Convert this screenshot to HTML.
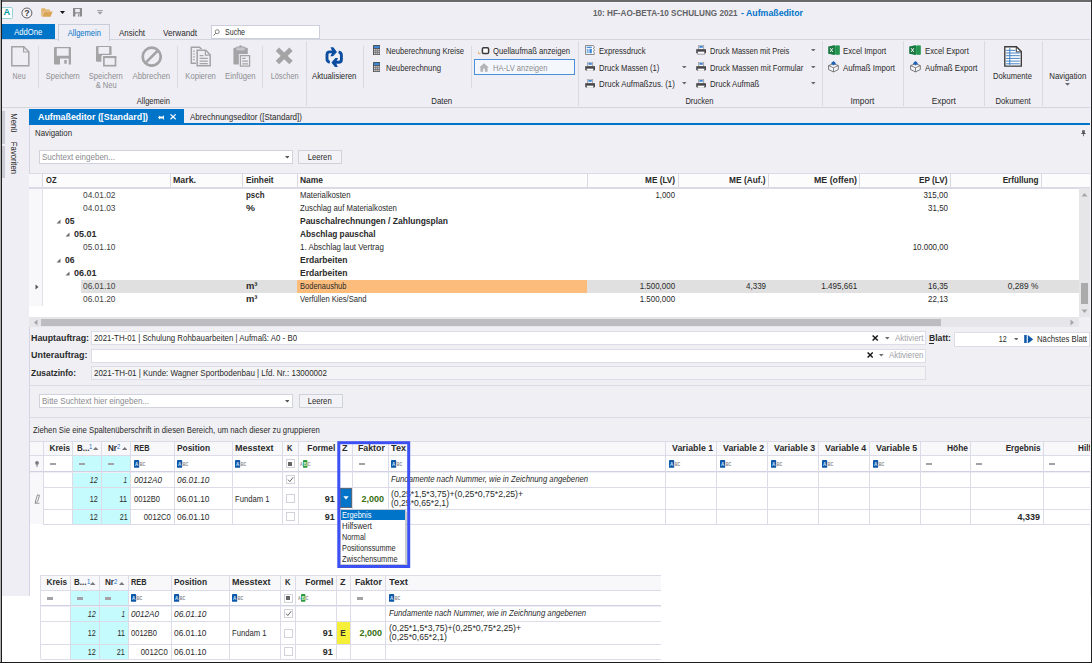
<!DOCTYPE html>
<html lang="de">
<head>
<meta charset="utf-8">
<title>Aufmaßeditor</title>
<style>
html,body{margin:0;padding:0;background:#fff;}
body{width:1092px;height:663px;overflow:hidden;}
#root{position:relative;width:1092px;height:663px;overflow:hidden;background:#fff;font-family:"Liberation Sans",sans-serif;font-size:8.8px;line-height:11px;color:#2a2a2a;}
#root div,#root span,#root svg{position:absolute;}
#root>div{left:0;top:0;width:0;height:0;}
#root span{white-space:pre;}
#root span b,#root span i{position:static;}
#root i{font-style:italic;}
</style>
</head>
<body>
<div id="root">
<div class="app-background">
<div style="left:0px;top:0px;width:1092px;height:596px;background:#efeef4;"></div>
<div style="left:29px;top:125px;width:1061px;height:471px;background:#f0f0f4;"></div>
</div>
<div class="title-bar">
<span style="top:7.5px;left:593px;transform-origin:0 50%;transform:scaleX(0.925);color:#636367;"><b>10: HF-AO-BETA-10 SCHULUNG 2021</b></span>
<span style="top:7.5px;left:740.8px;transform-origin:0 50%;transform:scaleX(0.996);color:#0074c9;"><b>- Aufmaßeditor</b></span>
</div>
<div class="ribbon-tabs">
<div style="left:2px;top:24px;width:53px;height:16px;background:#0074c9;"></div>
<span style="top:27.4px;left:12.36px;transform:scaleX(0.867);color:#fff;">AddOne</span>
<div style="left:2px;top:39.3px;width:1088px;height:1px;background:#d3d5df;"></div>
<div style="left:58px;top:24px;width:52px;height:17px;background:#efeef4;border:1px solid #c9ccd9;border-bottom:none;box-sizing:border-box;"></div>
<span style="top:27.9px;left:64.68px;transform:scaleX(0.854);color:#0074c9;">Allgemein</span>
<span style="top:27.9px;left:119px;transform-origin:0 50%;transform:scaleX(0.901);">Ansicht</span>
<span style="top:27.9px;left:163px;transform-origin:0 50%;transform:scaleX(0.927);">Verwandt</span>
<div style="left:211px;top:25px;width:109px;height:14px;background:#fff;border:1px solid #cdd0dc;box-sizing:border-box;"></div>
<span style="top:27.4px;left:225px;transform-origin:0 50%;transform:scaleX(0.802);">Suche</span>
</div>
<div class="ribbon-groups">
<div style="left:2px;top:107px;width:1088px;height:1px;background:#d3d5df;"></div>
<div style="left:38px;top:46px;width:1px;height:42px;background:#d9dae3;"></div>
<div style="left:177px;top:46px;width:1px;height:42px;background:#d9dae3;"></div>
<div style="left:262px;top:46px;width:1px;height:42px;background:#d9dae3;"></div>
<div style="left:363px;top:46px;width:1px;height:42px;background:#d9dae3;"></div>
<div style="left:471px;top:46px;width:1px;height:42px;background:#d9dae3;"></div>
<div style="left:306px;top:41px;width:1px;height:65px;background:#d9dae3;"></div>
<div style="left:578px;top:41px;width:1px;height:65px;background:#d9dae3;"></div>
<div style="left:822px;top:41px;width:1px;height:65px;background:#d9dae3;"></div>
<div style="left:903px;top:41px;width:1px;height:65px;background:#d9dae3;"></div>
<div style="left:984px;top:41px;width:1px;height:65px;background:#d9dae3;"></div>
<div style="left:1042px;top:41px;width:1px;height:65px;background:#d9dae3;"></div>
<span style="top:70.9px;left:10.63px;transform:scaleX(0.805);color:#8e8e92;">Neu</span>
<span style="top:70.9px;left:42.89px;transform:scaleX(0.858);color:#8e8e92;">Speichern</span>
<span style="top:70.9px;left:86.19px;transform:scaleX(0.858);color:#8e8e92;">Speichern</span>
<span style="top:79.9px;left:93.77px;transform:scaleX(0.859);color:#8e8e92;">&amp; Neu</span>
<span style="top:70.9px;left:130.42px;transform:scaleX(0.881);color:#8e8e92;">Abbrechen</span>
<span style="top:70.9px;left:182.59px;transform:scaleX(0.866);color:#8e8e92;">Kopieren</span>
<span style="top:70.9px;left:222.93px;transform:scaleX(0.878);color:#8e8e92;">Einfügen</span>
<span style="top:70.9px;left:267.67px;transform:scaleX(0.842);color:#8e8e92;">Löschen</span>
<span style="top:70.9px;left:309.11px;transform:scaleX(0.883);">Aktualisieren</span>
<span style="top:95.5px;left:134.08px;transform:scaleX(0.854);">Allgemein</span>
<span style="top:95.5px;left:429.86px;transform:scaleX(0.894);">Daten</span>
<span style="top:95.5px;left:682.92px;transform:scaleX(0.855);">Drucken</span>
<span style="top:95.5px;left:849.53px;transform:scaleX(0.962);">Import</span>
<span style="top:95.5px;left:930.58px;transform:scaleX(0.943);">Export</span>
<span style="top:95.5px;left:992.65px;transform:scaleX(0.873);">Dokument</span>
<span style="top:45.8px;left:385.6px;transform-origin:0 50%;transform:scaleX(0.867);">Neuberechnung Kreise</span>
<span style="top:62.5px;left:385.6px;transform-origin:0 50%;transform:scaleX(0.878);">Neuberechnung</span>
<span style="top:45.8px;left:493px;transform-origin:0 50%;transform:scaleX(0.87);">Quellaufmaß anzeigen</span>
<div style="left:474px;top:59px;width:101px;height:16px;background:#f4f7fc;border:1px solid #4a90d9;box-sizing:border-box;"></div>
<span style="top:62.5px;left:493px;transform-origin:0 50%;transform:scaleX(0.859);color:#8e8e92;">HA-LV anzeigen</span>
<span style="top:45.8px;left:599px;transform-origin:0 50%;transform:scaleX(0.872);">Expressdruck</span>
<span style="top:62.5px;left:599px;transform-origin:0 50%;transform:scaleX(0.869);">Druck Massen (1)</span>
<span style="top:79.3px;left:599px;transform-origin:0 50%;transform:scaleX(0.891);">Druck Aufmaßzus. (1)</span>
<span style="top:45.8px;left:709.8px;transform-origin:0 50%;transform:scaleX(0.853);">Druck Massen mit Preis</span>
<span style="top:62.5px;left:709.8px;transform-origin:0 50%;transform:scaleX(0.863);">Druck Massen mit Formular</span>
<span style="top:79.3px;left:709.8px;transform-origin:0 50%;transform:scaleX(0.883);">Druck Aufmaß</span>
<span style="top:45.8px;left:843.3px;transform-origin:0 50%;transform:scaleX(0.884);">Excel Import</span>
<span style="top:62.5px;left:843.3px;transform-origin:0 50%;transform:scaleX(0.894);">Aufmaß Import</span>
<span style="top:45.8px;left:924.5px;transform-origin:0 50%;transform:scaleX(0.887);">Excel Export</span>
<span style="top:62.5px;left:924.5px;transform-origin:0 50%;transform:scaleX(0.895);">Aufmaß Export</span>
<span style="top:70.9px;left:989.5px;transform:scaleX(0.862);">Dokumente</span>
<span style="top:70.9px;left:1046.71px;transform:scaleX(0.89);">Navigation</span>
</div>
<div class="side-strip">
<div style="left:2px;top:111px;width:3px;height:33px;background:#cbcbd6;"></div>
<div style="left:2px;top:146px;width:3px;height:32px;background:#cbcbd6;"></div>
<span style="left:13px;top:122.5px;transform:translate(-50%,-50%) rotate(90deg) scaleX(0.88);">Menü</span>
<span style="left:13px;top:158px;transform:translate(-50%,-50%) rotate(90deg) scaleX(0.88);">Favoriten</span>
</div>
<div class="document-tabs">
<div style="left:29px;top:109px;width:155px;height:16px;background:#0074c9;"></div>
<span style="top:111.7px;left:37.5px;transform-origin:0 50%;transform:scaleX(1.005);color:#fff;"><b>Aufmaßeditor ([Standard])</b></span>
<span style="top:111.7px;left:190px;transform-origin:0 50%;transform:scaleX(0.912);">Abrechnungseditor ([Standard])</span>
<div style="left:29px;top:123.4px;width:1062px;height:1.8px;background:#0074c9;"></div>
<div style="left:28.5px;top:125px;width:1px;height:471px;background:#d4d4e4;"></div>
</div>
<div class="navigation-panel">
<span style="top:127.9px;left:35px;transform-origin:0 50%;transform:scaleX(0.89);">Navigation</span>
<div style="left:39px;top:150px;width:254px;height:14px;background:#fff;border:1px solid #d0d2dc;box-sizing:border-box;"></div>
<span style="top:152.2px;left:42px;transform-origin:0 50%;transform:scaleX(0.91);color:#8a8a90;">Suchtext eingeben...</span>
<div style="left:298px;top:150px;width:44px;height:14px;background:#f3f3f7;border:1px solid #cfd1db;box-sizing:border-box;"></div>
<span style="top:152.2px;left:305.8px;transform:scaleX(0.876);">Leeren</span>
<div style="left:29px;top:173px;width:1061px;height:144px;background:#fff;"></div>
<div style="left:29px;top:173px;width:1061px;height:15px;background:#fcfcfd;"></div>
<div style="left:29px;top:173px;width:13px;height:132.5px;background:#f8f8fa;"></div>
<div style="left:29px;top:173px;width:1061px;height:1px;background:#dcdce8;"></div>
<div style="left:29px;top:187px;width:1061px;height:1.5px;background:#dadae6;"></div>
<div style="left:42px;top:174px;width:1px;height:13px;background:#d8d9e2;"></div>
<div style="left:170px;top:174px;width:1px;height:13px;background:#d8d9e2;"></div>
<div style="left:242px;top:174px;width:1px;height:13px;background:#d8d9e2;"></div>
<div style="left:297px;top:174px;width:1px;height:13px;background:#d8d9e2;"></div>
<div style="left:587px;top:174px;width:1px;height:13px;background:#d8d9e2;"></div>
<div style="left:678px;top:174px;width:1px;height:13px;background:#d8d9e2;"></div>
<div style="left:768px;top:174px;width:1px;height:13px;background:#d8d9e2;"></div>
<div style="left:859px;top:174px;width:1px;height:13px;background:#d8d9e2;"></div>
<div style="left:950px;top:174px;width:1px;height:13px;background:#d8d9e2;"></div>
<div style="left:1041px;top:174px;width:1px;height:13px;background:#d8d9e2;"></div>
<div style="left:42px;top:188px;width:1px;height:117.5px;background:#e0e0ea;"></div>
<span style="top:174.8px;left:46px;transform-origin:0 50%;transform:scaleX(0.859);"><b>OZ</b></span>
<span style="top:174.8px;left:173px;transform-origin:0 50%;transform:scaleX(1.001);"><b>Mark.</b></span>
<span style="top:174.8px;left:245.5px;transform-origin:0 50%;transform:scaleX(0.938);"><b>Einheit</b></span>
<span style="top:174.8px;left:300px;transform-origin:0 50%;transform:scaleX(0.96);"><b>Name</b></span>
<span style="top:174.8px;left:643.41px;transform-origin:100% 50%;transform:scaleX(0.935);"><b>ME (LV)</b></span>
<span style="top:174.8px;left:727.39px;transform-origin:100% 50%;transform:scaleX(0.945);"><b>ME (Auf.)</b></span>
<span style="top:174.8px;left:814px;transform-origin:100% 50%;transform:scaleX(1.0);"><b>ME (offen)</b></span>
<span style="top:174.8px;left:917.03px;transform-origin:100% 50%;transform:scaleX(0.935);"><b>EP (LV)</b></span>
<span style="top:174.8px;left:999.89px;transform-origin:100% 50%;transform:scaleX(0.932);"><b>Erfüllung</b></span>
<div style="left:81px;top:280px;width:998px;height:13px;background:#e0e0e0;"></div>
<div style="left:297px;top:280px;width:290px;height:13px;background:#fcbc7c;"></div>
<span style="top:190.1px;left:83px;transform-origin:0 50%;transform:scaleX(0.949);color:#444;">04.01.02</span>
<span style="top:203.1px;left:83px;transform-origin:0 50%;transform:scaleX(0.949);color:#444;">04.01.03</span>
<span style="top:216.1px;left:65px;transform-origin:0 50%;transform:scaleX(0.97);"><b>05</b></span>
<span style="top:229.1px;left:74px;transform-origin:0 50%;transform:scaleX(1.022);"><b>05.01</b></span>
<span style="top:242.1px;left:83px;transform-origin:0 50%;transform:scaleX(0.949);color:#444;">05.01.10</span>
<span style="top:255.1px;left:65px;transform-origin:0 50%;transform:scaleX(0.97);"><b>06</b></span>
<span style="top:268.1px;left:74px;transform-origin:0 50%;transform:scaleX(1.022);"><b>06.01</b></span>
<span style="top:281.3px;left:83px;transform-origin:0 50%;transform:scaleX(0.949);color:#444;">06.01.10</span>
<span style="top:294.3px;left:83px;transform-origin:0 50%;transform:scaleX(0.949);color:#444;">06.01.20</span>
<span style="top:190.1px;left:245.5px;transform-origin:0 50%;transform:scaleX(0.9);"><b>psch</b></span>
<span style="top:203.1px;left:245.5px;transform-origin:0 50%;transform:scaleX(1.15);"><b>%</b></span>
<span style="top:281.3px;left:245.5px;transform-origin:0 50%;transform:scaleX(1.068);"><b>m³</b></span>
<span style="top:294.3px;left:245.5px;transform-origin:0 50%;transform:scaleX(1.068);"><b>m³</b></span>
<span style="top:190.1px;left:300px;transform-origin:0 50%;transform:scaleX(0.883);">Materialkosten</span>
<span style="top:203.1px;left:300px;transform-origin:0 50%;transform:scaleX(0.88);">Zuschlag auf Materialkosten</span>
<span style="top:216.1px;left:300px;transform-origin:0 50%;transform:scaleX(0.964);"><b>Pauschalrechnungen / Zahlungsplan</b></span>
<span style="top:229.1px;left:300px;transform-origin:0 50%;transform:scaleX(0.942);"><b>Abschlag pauschal</b></span>
<span style="top:242.1px;left:300px;transform-origin:0 50%;transform:scaleX(0.902);">1. Abschlag laut Vertrag</span>
<span style="top:255.1px;left:300px;transform-origin:0 50%;transform:scaleX(0.972);"><b>Erdarbeiten</b></span>
<span style="top:268.1px;left:300px;transform-origin:0 50%;transform:scaleX(0.972);"><b>Erdarbeiten</b></span>
<span style="top:281.3px;left:300px;transform-origin:0 50%;transform:scaleX(0.856);">Bodenaushub</span>
<span style="top:294.3px;left:300px;transform-origin:0 50%;transform:scaleX(0.866);">Verfüllen Kies/Sand</span>
<span style="top:190.1px;left:653.48px;transform-origin:100% 50%;transform:scaleX(0.886);">1,000</span>
<span style="top:281.3px;left:636.36px;transform-origin:100% 50%;transform:scaleX(0.907);">1.500,000</span>
<span style="top:294.3px;left:636.36px;transform-origin:100% 50%;transform:scaleX(0.907);">1.500,000</span>
<span style="top:281.3px;left:743.98px;transform-origin:100% 50%;transform:scaleX(0.908);">4,339</span>
<span style="top:281.3px;left:818.36px;transform-origin:100% 50%;transform:scaleX(0.92);">1.495,661</span>
<span style="top:190.1px;left:921.09px;transform-origin:100% 50%;transform:scaleX(0.911);">315,00</span>
<span style="top:203.1px;left:925.98px;transform-origin:100% 50%;transform:scaleX(0.908);">31,50</span>
<span style="top:242.1px;left:908.86px;transform-origin:100% 50%;transform:scaleX(0.907);">10.000,00</span>
<span style="top:281.3px;left:925.98px;transform-origin:100% 50%;transform:scaleX(0.908);">16,35</span>
<span style="top:294.3px;left:925.98px;transform-origin:100% 50%;transform:scaleX(0.908);">22,13</span>
<span style="top:281.3px;left:1006.22px;transform-origin:100% 50%;transform:scaleX(0.945);">0,289 %</span>
<svg style="left:55.6px;top:219.3px;" width="5" height="5" viewBox="0 0 5 5"><path d="M4.5 0.5V4.5H0.5Z" fill="#6c6c70"/></svg>
<svg style="left:64.8px;top:232.3px;" width="5" height="5" viewBox="0 0 5 5"><path d="M4.5 0.5V4.5H0.5Z" fill="#6c6c70"/></svg>
<svg style="left:55.6px;top:258.3px;" width="5" height="5" viewBox="0 0 5 5"><path d="M4.5 0.5V4.5H0.5Z" fill="#6c6c70"/></svg>
<svg style="left:64.8px;top:271.3px;" width="5" height="5" viewBox="0 0 5 5"><path d="M4.5 0.5V4.5H0.5Z" fill="#6c6c70"/></svg>
<svg style="left:34.5px;top:283.5px;" width="4" height="6" viewBox="0 0 4 6"><path d="M0.5 0.5L3.5 3L0.5 5.5Z" fill="#555"/></svg>
<div style="left:1079px;top:188px;width:11.7px;height:129px;background:#e6e6e9;"></div>
<div style="left:1081px;top:283px;width:7px;height:21px;background:#ababab;"></div>
<svg style="left:1081px;top:191.5px;" width="7" height="5" viewBox="0 0 7 5"><path d="M0.5 4.5L3.5 1L6.5 4.5Z" fill="#a6a6aa"/></svg>
<svg style="left:1081px;top:308.5px;" width="7" height="5" viewBox="0 0 7 5"><path d="M0.5 0.5L3.5 4L6.5 0.5Z" fill="#a6a6aa"/></svg>
<div style="left:29px;top:317px;width:1050px;height:10px;background:#e6e6e9;"></div>
<div style="left:41px;top:319px;width:900px;height:7px;background:#bdbdc0;"></div>
<svg style="left:33px;top:319px;" width="5" height="7" viewBox="0 0 5 7"><path d="M4.5 0.5L1 3.5L4.5 6.5Z" fill="#a6a6aa"/></svg>
<svg style="left:1069.5px;top:319px;" width="5" height="7" viewBox="0 0 5 7"><path d="M0.5 0.5L4 3.5L0.5 6.5Z" fill="#a6a6aa"/></svg>
</div>
<div class="order-form">
<span style="top:333.4px;left:30.8px;transform-origin:0 50%;transform:scaleX(1.006);"><b>Hauptauftrag:</b></span>
<span style="top:350.4px;left:30.8px;transform-origin:0 50%;transform:scaleX(1.014);"><b>Unterauftrag:</b></span>
<span style="top:367.9px;left:30.8px;transform-origin:0 50%;transform:scaleX(0.959);"><b>Zusatzinfo:</b></span>
<div style="left:91px;top:331px;width:835px;height:14px;background:#fff;border:1px solid #dcdde6;box-sizing:border-box;"></div>
<div style="left:91px;top:349px;width:835px;height:14px;background:#fff;border:1px solid #dcdde6;box-sizing:border-box;"></div>
<div style="left:91px;top:366px;width:835px;height:14px;background:#f4f4f6;border:1px solid #dcdde6;box-sizing:border-box;"></div>
<span style="top:333.2px;left:93.5px;transform-origin:0 50%;transform:scaleX(0.894);">2021-TH-01 | Schulung Rohbauarbeiten | Aufmaß: A0 - B0</span>
<span style="top:367.9px;left:93.5px;transform-origin:0 50%;transform:scaleX(0.906);">2021-TH-01 | Kunde: Wagner Sportbodenbau | Lfd. Nr.: 13000002</span>
<span style="top:333.2px;left:894.8px;transform-origin:0 50%;transform:scaleX(0.911);color:#a0a0a6;">Aktiviert</span>
<span style="top:350.4px;left:889px;transform-origin:0 50%;transform:scaleX(0.893);color:#a0a0a6;">Aktivieren</span>
<span style="top:333.4px;left:929px;transform-origin:0 50%;transform:scaleX(0.978);"><b>Blatt:</b></span>
<div style="left:929px;top:343px;width:5px;height:1px;background:#2a2a2a;"></div>
<div style="left:953.5px;top:331.5px;width:136.5px;height:15px;background:#fff;border:1px solid #dcdde6;box-sizing:border-box;"></div>
<span style="top:333.7px;left:996.7px;transform-origin:100% 50%;transform:scaleX(0.817);">12</span>
<span style="top:333.7px;left:1036.5px;transform-origin:0 50%;transform:scaleX(0.882);">Nächstes Blatt</span>
</div>
<div class="measure-toolbar">
<div style="left:29px;top:385px;width:1061px;height:1px;background:#d9dae3;"></div>
<div style="left:39px;top:394px;width:254px;height:14px;background:#fff;border:1px solid #d0d2dc;box-sizing:border-box;"></div>
<span style="top:396.2px;left:42px;transform-origin:0 50%;transform:scaleX(0.912);color:#8a8a90;">Bitte Suchtext hier eingeben...</span>
<div style="left:298.5px;top:394px;width:44px;height:14px;background:#f3f3f7;border:1px solid #cfd1db;box-sizing:border-box;"></div>
<span style="top:396.2px;left:306.3px;transform:scaleX(0.876);">Leeren</span>
<div style="left:29px;top:417px;width:1061px;height:1px;background:#d9dae3;"></div>
<span style="top:425.2px;left:33.3px;transform-origin:0 50%;transform:scaleX(0.881);">Ziehen Sie eine Spaltenüberschrift in diesen Bereich, um nach dieser zu gruppieren</span>
</div>
<div class="measure-grids">
<div style="left:30px;top:441px;width:1060px;height:155px;background:#fff;"></div>
<div style="left:30px;top:441px;width:1060px;height:14px;background:#f8f8fb;"></div>
<div style="left:72.5px;top:455px;width:57.5px;height:69px;background:#c6fbfd;"></div>
<div style="left:30px;top:455px;width:13px;height:69px;background:#f8f8fb;"></div>
<div style="left:30px;top:441px;width:1060px;height:1px;background:#dcdce8;"></div>
<div style="left:30px;top:455px;width:1060px;height:1px;background:#dcdce8;"></div>
<div style="left:30px;top:471px;width:1060px;height:1px;background:#d0d0e2;"></div>
<div style="left:43px;top:487px;width:1047px;height:1px;background:#dcdce8;"></div>
<div style="left:43px;top:509px;width:1047px;height:1px;background:#dcdce8;"></div>
<div style="left:43px;top:524px;width:1047px;height:1px;background:#dcdce8;"></div>
<div style="left:30px;top:472px;width:1060px;height:1px;background:#eeeef5;"></div>
<div style="left:43px;top:441px;width:1px;height:83px;background:#dcdce8;"></div>
<div style="left:72px;top:441px;width:1px;height:83px;background:#dcdce8;"></div>
<div style="left:101px;top:441px;width:1px;height:83px;background:#dcdce8;"></div>
<div style="left:130px;top:441px;width:1px;height:83px;background:#dcdce8;"></div>
<div style="left:174px;top:441px;width:1px;height:83px;background:#dcdce8;"></div>
<div style="left:232px;top:441px;width:1px;height:83px;background:#dcdce8;"></div>
<div style="left:282px;top:441px;width:1px;height:83px;background:#dcdce8;"></div>
<div style="left:298px;top:441px;width:1px;height:83px;background:#dcdce8;"></div>
<div style="left:338px;top:441px;width:1px;height:83px;background:#dcdce8;"></div>
<div style="left:352px;top:441px;width:1px;height:83px;background:#dcdce8;"></div>
<div style="left:388px;top:441px;width:1px;height:83px;background:#dcdce8;"></div>
<div style="left:665px;top:441px;width:1px;height:83px;background:#dcdce8;"></div>
<div style="left:716px;top:441px;width:1px;height:83px;background:#dcdce8;"></div>
<div style="left:767px;top:441px;width:1px;height:83px;background:#dcdce8;"></div>
<div style="left:818px;top:441px;width:1px;height:83px;background:#dcdce8;"></div>
<div style="left:869px;top:441px;width:1px;height:83px;background:#dcdce8;"></div>
<div style="left:920px;top:441px;width:1px;height:83px;background:#dcdce8;"></div>
<div style="left:970px;top:441px;width:1px;height:83px;background:#dcdce8;"></div>
<div style="left:1043px;top:441px;width:1px;height:83px;background:#dcdce8;"></div>
<span style="top:442.85px;left:47.98px;transform-origin:100% 50%;transform:scaleX(0.931);"><b>Kreis</b></span>
<span style="top:442.85px;left:76.6px;transform-origin:0 50%;transform:scaleX(0.906);"><b>B...</b></span>
<span style="left:89.3px;top:442.34999999999997px;font-size:7.4px;line-height:9px;color:#1a6fc4;transform:scaleX(0.8);transform-origin:0 50%;">1</span>
<svg style="left:92.5px;top:446.95px;" width="5.5" height="3" viewBox="0 0 5.5 3"><path d="M0 3L2.75 0L5.5 3Z" fill="#77777c"/></svg>
<span style="top:442.85px;left:107.55px;transform-origin:0 50%;transform:scaleX(0.92);"><b>Nr</b></span>
<span style="left:116.85px;top:442.34999999999997px;font-size:7.4px;line-height:9px;color:#1a6fc4;transform:scaleX(0.8);transform-origin:0 50%;">2</span>
<svg style="left:121.75px;top:446.95px;" width="5.5" height="3" viewBox="0 0 5.5 3"><path d="M0 3L2.75 0L5.5 3Z" fill="#77777c"/></svg>
<span style="top:442.85px;left:133.7px;transform-origin:0 50%;transform:scaleX(0.834);"><b>REB</b></span>
<span style="top:442.85px;left:177.05px;transform-origin:0 50%;transform:scaleX(0.951);"><b>Position</b></span>
<span style="top:442.85px;left:235px;transform-origin:0 50%;transform:scaleX(1.022);"><b>Messtext</b></span>
<span style="top:442.85px;left:287.2px;transform-origin:0 50%;transform:scaleX(0.865);"><b>K</b></span>
<span style="top:442.85px;left:305.66px;transform-origin:100% 50%;transform:scaleX(0.954);"><b>Formel</b></span>
<span style="top:442.85px;left:342.3px;transform-origin:0 50%;transform:scaleX(1.023);"><b>Z</b></span>
<span style="top:442.85px;left:357.91px;transform-origin:100% 50%;transform:scaleX(1.004);"><b>Faktor</b></span>
<span style="top:442.85px;left:391.0px;transform-origin:0 50%;transform:scaleX(1.033);"><b>Tex</b></span>
<div style="left:49.5px;top:462.7px;width:6px;height:2.4px;background:#a2a2a7;"></div>
<div style="left:79.0px;top:462.7px;width:6px;height:2.4px;background:#a2a2a7;"></div>
<div style="left:107.75px;top:462.7px;width:6px;height:2.4px;background:#a2a2a7;"></div>
<svg style="left:133.7px;top:459.9px;" width="13" height="8" viewBox="0 0 13 8"><rect x="0" y="0" width="5.2" height="7.8" rx="0.9" fill="#0c57a8"/><text x="2.6" y="5.6" font-size="4.6" font-weight="bold" text-anchor="middle" fill="#dbe9f8" font-family="Liberation Sans, sans-serif">A</text><text x="5.8" y="5.9" font-size="5.4" font-weight="bold" fill="#8a8a8e" font-family="Liberation Sans, sans-serif" textLength="5.6" lengthAdjust="spacingAndGlyphs">BC</text></svg>
<svg style="left:177.05px;top:459.9px;" width="13" height="8" viewBox="0 0 13 8"><rect x="0" y="0" width="5.2" height="7.8" rx="0.9" fill="#0c57a8"/><text x="2.6" y="5.6" font-size="4.6" font-weight="bold" text-anchor="middle" fill="#dbe9f8" font-family="Liberation Sans, sans-serif">A</text><text x="5.8" y="5.9" font-size="5.4" font-weight="bold" fill="#8a8a8e" font-family="Liberation Sans, sans-serif" textLength="5.6" lengthAdjust="spacingAndGlyphs">BC</text></svg>
<svg style="left:235px;top:459.9px;" width="13" height="8" viewBox="0 0 13 8"><rect x="0" y="0" width="5.2" height="7.8" rx="0.9" fill="#0c57a8"/><text x="2.6" y="5.6" font-size="4.6" font-weight="bold" text-anchor="middle" fill="#dbe9f8" font-family="Liberation Sans, sans-serif">A</text><text x="5.8" y="5.9" font-size="5.4" font-weight="bold" fill="#8a8a8e" font-family="Liberation Sans, sans-serif" textLength="5.6" lengthAdjust="spacingAndGlyphs">BC</text></svg>
<div style="left:285.5px;top:459.4px;width:9px;height:9px;background:#fff;border:1px solid #d2d2da;box-sizing:border-box;"></div>
<div style="left:288.0px;top:461.9px;width:4px;height:4px;background:#666;"></div>
<svg style="left:300.2px;top:459.9px;" width="13" height="8" viewBox="0 0 13 8"><text x="0" y="5.9" font-size="5" font-weight="bold" fill="#8a8a8e" font-family="Liberation Sans, sans-serif" textLength="2.8" lengthAdjust="spacingAndGlyphs">A</text><rect x="3" y="0" width="4.4" height="7.8" rx="0.9" fill="#2c9a3a"/><text x="5.2" y="5.7" font-size="4.6" font-weight="bold" text-anchor="middle" fill="#e2f5e4" font-family="Liberation Sans, sans-serif">B</text><text x="7.7" y="5.9" font-size="5" font-weight="bold" fill="#8a8a8e" font-family="Liberation Sans, sans-serif" textLength="2.8" lengthAdjust="spacingAndGlyphs">C</text></svg>
<div style="left:359.0px;top:462.7px;width:6px;height:2.4px;background:#a2a2a7;"></div>
<svg style="left:391.0px;top:459.9px;" width="13" height="8" viewBox="0 0 13 8"><rect x="0" y="0" width="5.2" height="7.8" rx="0.9" fill="#0c57a8"/><text x="2.6" y="5.6" font-size="4.6" font-weight="bold" text-anchor="middle" fill="#dbe9f8" font-family="Liberation Sans, sans-serif">A</text><text x="5.8" y="5.9" font-size="5.4" font-weight="bold" fill="#8a8a8e" font-family="Liberation Sans, sans-serif" textLength="5.6" lengthAdjust="spacingAndGlyphs">BC</text></svg>
<span style="top:474.5px;left:88.15px;transform-origin:100% 50%;transform:scaleX(0.817);"><i>12</i></span>
<span style="top:474.5px;left:122.39px;transform-origin:100% 50%;transform:scaleX(0.713);"><i>1</i></span>
<span style="top:474.5px;left:133.5px;transform-origin:0 50%;transform:scaleX(0.923);"><i>0012A0</i></span>
<span style="top:474.5px;left:177.05px;transform-origin:0 50%;transform:scaleX(0.949);"><i>06.01.10</i></span>
<div style="left:285.5px;top:474.8px;width:9px;height:9px;background:#fff;border:1px solid #d2d2da;box-sizing:border-box;"></div>
<svg style="left:286.5px;top:475.8px;" width="7" height="7" viewBox="0 0 7 7"><path d="M1 3.6L2.8 5.6L6.2 1.2" fill="none" stroke="#555" stroke-width="0.9"/></svg>
<span style="top:473.5px;left:391.2px;transform-origin:0 50%;transform:scaleX(0.88);"><i>Fundamente nach Nummer, wie in Zeichnung angebenen</i></span>
<span style="top:493.5px;left:88.15px;transform-origin:100% 50%;transform:scaleX(0.817);">12</span>
<span style="top:493.5px;left:118.16px;transform-origin:100% 50%;transform:scaleX(0.875);">11</span>
<span style="top:493.5px;left:133.5px;transform-origin:0 50%;transform:scaleX(0.857);">0012B0</span>
<span style="top:493.5px;left:177.05px;transform-origin:0 50%;transform:scaleX(0.949);">06.01.10</span>
<span style="top:493.5px;left:235px;transform-origin:0 50%;transform:scaleX(0.871);">Fundam 1</span>
<div style="left:285.5px;top:494.1px;width:9px;height:9px;background:#fff;border:1px solid #d2d2da;box-sizing:border-box;"></div>
<span style="top:493.5px;left:325.2px;transform-origin:100% 50%;transform:scaleX(1.021);"><b>91</b></span>
<span style="top:493.5px;left:362.48px;transform-origin:100% 50%;transform:scaleX(1.022);color:#38700f;"><b>2,000</b></span>
<span style="top:488.7px;left:391.2px;transform-origin:0 50%;transform:scaleX(0.989);">(0,25*1,5*3,75)+(0,25*0,75*2,25)+</span>
<span style="top:497.8px;left:391.2px;transform-origin:0 50%;transform:scaleX(0.98);">(0,25*0,65*2,1)</span>
<span style="top:511.8px;left:88.15px;transform-origin:100% 50%;transform:scaleX(0.817);">12</span>
<span style="top:511.8px;left:117.5px;transform-origin:100% 50%;transform:scaleX(0.817);">21</span>
<span style="top:511.8px;left:140.12px;transform-origin:100% 50%;transform:scaleX(0.876);">0012C0</span>
<span style="top:511.8px;left:177.05px;transform-origin:0 50%;transform:scaleX(0.949);">06.01.10</span>
<div style="left:285.5px;top:512.4px;width:9px;height:9px;background:#fff;border:1px solid #d2d2da;box-sizing:border-box;"></div>
<span style="top:511.8px;left:325.2px;transform-origin:100% 50%;transform:scaleX(1.021);"><b>91</b></span>
<span style="top:442.85px;left:671.91px;transform-origin:100% 50%;transform:scaleX(0.998);"><b>Variable 1</b></span>
<svg style="left:668.5px;top:459.9px;" width="13" height="8" viewBox="0 0 13 8"><rect x="0" y="0" width="5.2" height="7.8" rx="0.9" fill="#0c57a8"/><text x="2.6" y="5.6" font-size="4.6" font-weight="bold" text-anchor="middle" fill="#dbe9f8" font-family="Liberation Sans, sans-serif">A</text><text x="5.8" y="5.9" font-size="5.4" font-weight="bold" fill="#8a8a8e" font-family="Liberation Sans, sans-serif" textLength="5.6" lengthAdjust="spacingAndGlyphs">BC</text></svg>
<span style="top:442.85px;left:722.91px;transform-origin:100% 50%;transform:scaleX(0.998);"><b>Variable 2</b></span>
<svg style="left:719.5px;top:459.9px;" width="13" height="8" viewBox="0 0 13 8"><rect x="0" y="0" width="5.2" height="7.8" rx="0.9" fill="#0c57a8"/><text x="2.6" y="5.6" font-size="4.6" font-weight="bold" text-anchor="middle" fill="#dbe9f8" font-family="Liberation Sans, sans-serif">A</text><text x="5.8" y="5.9" font-size="5.4" font-weight="bold" fill="#8a8a8e" font-family="Liberation Sans, sans-serif" textLength="5.6" lengthAdjust="spacingAndGlyphs">BC</text></svg>
<span style="top:442.85px;left:773.91px;transform-origin:100% 50%;transform:scaleX(0.998);"><b>Variable 3</b></span>
<svg style="left:770.5px;top:459.9px;" width="13" height="8" viewBox="0 0 13 8"><rect x="0" y="0" width="5.2" height="7.8" rx="0.9" fill="#0c57a8"/><text x="2.6" y="5.6" font-size="4.6" font-weight="bold" text-anchor="middle" fill="#dbe9f8" font-family="Liberation Sans, sans-serif">A</text><text x="5.8" y="5.9" font-size="5.4" font-weight="bold" fill="#8a8a8e" font-family="Liberation Sans, sans-serif" textLength="5.6" lengthAdjust="spacingAndGlyphs">BC</text></svg>
<span style="top:442.85px;left:824.91px;transform-origin:100% 50%;transform:scaleX(0.998);"><b>Variable 4</b></span>
<svg style="left:821.5px;top:459.9px;" width="13" height="8" viewBox="0 0 13 8"><rect x="0" y="0" width="5.2" height="7.8" rx="0.9" fill="#0c57a8"/><text x="2.6" y="5.6" font-size="4.6" font-weight="bold" text-anchor="middle" fill="#dbe9f8" font-family="Liberation Sans, sans-serif">A</text><text x="5.8" y="5.9" font-size="5.4" font-weight="bold" fill="#8a8a8e" font-family="Liberation Sans, sans-serif" textLength="5.6" lengthAdjust="spacingAndGlyphs">BC</text></svg>
<span style="top:442.85px;left:875.66px;transform-origin:100% 50%;transform:scaleX(0.998);"><b>Variable 5</b></span>
<svg style="left:872.5px;top:459.9px;" width="13" height="8" viewBox="0 0 13 8"><rect x="0" y="0" width="5.2" height="7.8" rx="0.9" fill="#0c57a8"/><text x="2.6" y="5.6" font-size="4.6" font-weight="bold" text-anchor="middle" fill="#dbe9f8" font-family="Liberation Sans, sans-serif">A</text><text x="5.8" y="5.9" font-size="5.4" font-weight="bold" fill="#8a8a8e" font-family="Liberation Sans, sans-serif" textLength="5.6" lengthAdjust="spacingAndGlyphs">BC</text></svg>
<span style="top:442.85px;left:945.75px;transform-origin:100% 50%;transform:scaleX(0.955);"><b>Höhe</b></span>
<span style="top:442.85px;left:1003.11px;transform-origin:100% 50%;transform:scaleX(0.93);"><b>Ergebnis</b></span>
<div style="left:1044px;top:441px;width:46.5px;height:14px;overflow:hidden;"><span style="left:34px;top:1.85px;transform-origin:0 50%;transform:scaleX(0.93);"><b>Hilfswert</b></span></div>
<div style="left:925.75px;top:462.7px;width:6px;height:2.4px;background:#a2a2a7;"></div>
<div style="left:976.25px;top:462.7px;width:6px;height:2.4px;background:#a2a2a7;"></div>
<div style="left:1049.25px;top:462.7px;width:6px;height:2.4px;background:#a2a2a7;"></div>
<span style="top:511.8px;left:1018.23px;transform-origin:100% 50%;transform:scaleX(1.022);"><b>4,339</b></span>
<svg style="left:34.9px;top:460.59999999999997px;" width="4" height="6" viewBox="0 0 4 6"><circle cx="2" cy="1.9" r="1.9" fill="#7c7c80"/><path d="M2 3.3V6" stroke="#7c7c80" stroke-width="1"/></svg>
<svg style="left:33.5px;top:493.6px;" width="7" height="10" viewBox="0 0 7 10"><path d="M3.5 0.8L5.5 1.3L3.6 7.6L1.4 8.8L1.5 7Z" fill="none" stroke="#777" stroke-width="0.8"/><path d="M0.8 9.3H5.5" stroke="#777" stroke-width="0.7"/></svg>
<div style="left:340.3px;top:487.6px;width:11.7px;height:20.3px;background:#0074c9;border:0.6px solid #5a6a7a;box-sizing:border-box;"></div>
<svg style="left:343px;top:496px;" width="6" height="4" viewBox="0 0 6 4"><path d="M0.3 0.3H5.7L3 3.6Z" fill="#fff"/></svg>
<div style="left:340px;top:509px;width:66px;height:56px;background:#fff;border:1px solid #c9c9d2;box-sizing:border-box;box-shadow:0.5px 0.5px 1px rgba(0,0,0,0.2);"></div>
<div style="left:341px;top:510.2px;width:64px;height:10px;background:#0074c9;"></div>
<span style="top:510.1px;left:342.2px;transform-origin:0 50%;transform:scaleX(0.846);color:#fff;">Ergebnis</span>
<span style="top:520.95px;left:342.2px;transform-origin:0 50%;transform:scaleX(0.889);">Hilfswert</span>
<span style="top:531.8px;left:342.2px;transform-origin:0 50%;transform:scaleX(0.832);">Normal</span>
<span style="top:542.65px;left:342.2px;transform-origin:0 50%;transform:scaleX(0.832);">Positionssumme</span>
<span style="top:553.5px;left:342.2px;transform-origin:0 50%;transform:scaleX(0.841);">Zwischensumme</span>
<svg style="left:335px;top:439px;" width="78" height="132" viewBox="0 0 78 132"><rect x="3.8" y="3.7" width="69.9" height="123.8" fill="none" stroke="#3c50f4" stroke-width="3"/></svg>
<div style="left:336px;top:622px;width:14px;height:22px;background:#f5ef3a;"></div>
<div style="left:40.5px;top:575px;width:620.5px;height:15px;background:#f8f8fb;"></div>
<div style="left:70px;top:590px;width:57.5px;height:69px;background:#c6fbfd;"></div>
<div style="left:40.5px;top:575px;width:620.5px;height:1px;background:#dcdce8;"></div>
<div style="left:40.5px;top:590px;width:620.5px;height:1px;background:#dcdce8;"></div>
<div style="left:40.5px;top:605px;width:620.5px;height:1px;background:#d0d0e2;"></div>
<div style="left:40.5px;top:621px;width:620.5px;height:1px;background:#dcdce8;"></div>
<div style="left:40.5px;top:644px;width:620.5px;height:1px;background:#dcdce8;"></div>
<div style="left:40.5px;top:659px;width:620.5px;height:1px;background:#dcdce8;"></div>
<div style="left:40.5px;top:606px;width:620.5px;height:1px;background:#eeeef5;"></div>
<div style="left:40px;top:575px;width:1px;height:84px;background:#dcdce8;"></div>
<div style="left:70px;top:575px;width:1px;height:84px;background:#dcdce8;"></div>
<div style="left:99px;top:575px;width:1px;height:84px;background:#dcdce8;"></div>
<div style="left:128px;top:575px;width:1px;height:84px;background:#dcdce8;"></div>
<div style="left:171px;top:575px;width:1px;height:84px;background:#dcdce8;"></div>
<div style="left:229px;top:575px;width:1px;height:84px;background:#dcdce8;"></div>
<div style="left:280px;top:575px;width:1px;height:84px;background:#dcdce8;"></div>
<div style="left:295px;top:575px;width:1px;height:84px;background:#dcdce8;"></div>
<div style="left:336px;top:575px;width:1px;height:84px;background:#dcdce8;"></div>
<div style="left:350px;top:575px;width:1px;height:84px;background:#dcdce8;"></div>
<div style="left:385px;top:575px;width:1px;height:84px;background:#dcdce8;"></div>
<div style="left:40px;top:575px;width:1px;height:84px;background:#dcdce8;"></div>
<span style="top:577.45px;left:45.48px;transform-origin:100% 50%;transform:scaleX(0.931);"><b>Kreis</b></span>
<span style="top:577.45px;left:74.1px;transform-origin:0 50%;transform:scaleX(0.906);"><b>B...</b></span>
<span style="left:86.8px;top:576.95px;font-size:7.4px;line-height:9px;color:#1a6fc4;transform:scaleX(0.8);transform-origin:0 50%;">1</span>
<svg style="left:90px;top:581.5500000000001px;" width="5.5" height="3" viewBox="0 0 5.5 3"><path d="M0 3L2.75 0L5.5 3Z" fill="#77777c"/></svg>
<span style="top:577.45px;left:105.05px;transform-origin:0 50%;transform:scaleX(0.92);"><b>Nr</b></span>
<span style="left:114.35px;top:576.95px;font-size:7.4px;line-height:9px;color:#1a6fc4;transform:scaleX(0.8);transform-origin:0 50%;">2</span>
<svg style="left:119.25px;top:581.5500000000001px;" width="5.5" height="3" viewBox="0 0 5.5 3"><path d="M0 3L2.75 0L5.5 3Z" fill="#77777c"/></svg>
<span style="top:577.45px;left:131.2px;transform-origin:0 50%;transform:scaleX(0.834);"><b>REB</b></span>
<span style="top:577.45px;left:174.05px;transform-origin:0 50%;transform:scaleX(0.951);"><b>Position</b></span>
<span style="top:577.45px;left:231.75px;transform-origin:0 50%;transform:scaleX(1.022);"><b>Messtext</b></span>
<span style="top:577.45px;left:285.2px;transform-origin:0 50%;transform:scaleX(0.865);"><b>K</b></span>
<span style="top:577.45px;left:303.66px;transform-origin:100% 50%;transform:scaleX(0.954);"><b>Formel</b></span>
<span style="top:577.45px;left:340.3px;transform-origin:0 50%;transform:scaleX(1.023);"><b>Z</b></span>
<span style="top:577.45px;left:355.41px;transform-origin:100% 50%;transform:scaleX(1.004);"><b>Faktor</b></span>
<span style="top:577.45px;left:388.5px;transform-origin:0 50%;transform:scaleX(1.09);"><b>Text</b></span>
<div style="left:47.0px;top:597.1999999999999px;width:6px;height:2.4px;background:#a2a2a7;"></div>
<div style="left:76.5px;top:597.1999999999999px;width:6px;height:2.4px;background:#a2a2a7;"></div>
<div style="left:105.25px;top:597.1999999999999px;width:6px;height:2.4px;background:#a2a2a7;"></div>
<svg style="left:131.2px;top:594.4px;" width="13" height="8" viewBox="0 0 13 8"><rect x="0" y="0" width="5.2" height="7.8" rx="0.9" fill="#0c57a8"/><text x="2.6" y="5.6" font-size="4.6" font-weight="bold" text-anchor="middle" fill="#dbe9f8" font-family="Liberation Sans, sans-serif">A</text><text x="5.8" y="5.9" font-size="5.4" font-weight="bold" fill="#8a8a8e" font-family="Liberation Sans, sans-serif" textLength="5.6" lengthAdjust="spacingAndGlyphs">BC</text></svg>
<svg style="left:174.05px;top:594.4px;" width="13" height="8" viewBox="0 0 13 8"><rect x="0" y="0" width="5.2" height="7.8" rx="0.9" fill="#0c57a8"/><text x="2.6" y="5.6" font-size="4.6" font-weight="bold" text-anchor="middle" fill="#dbe9f8" font-family="Liberation Sans, sans-serif">A</text><text x="5.8" y="5.9" font-size="5.4" font-weight="bold" fill="#8a8a8e" font-family="Liberation Sans, sans-serif" textLength="5.6" lengthAdjust="spacingAndGlyphs">BC</text></svg>
<svg style="left:231.75px;top:594.4px;" width="13" height="8" viewBox="0 0 13 8"><rect x="0" y="0" width="5.2" height="7.8" rx="0.9" fill="#0c57a8"/><text x="2.6" y="5.6" font-size="4.6" font-weight="bold" text-anchor="middle" fill="#dbe9f8" font-family="Liberation Sans, sans-serif">A</text><text x="5.8" y="5.9" font-size="5.4" font-weight="bold" fill="#8a8a8e" font-family="Liberation Sans, sans-serif" textLength="5.6" lengthAdjust="spacingAndGlyphs">BC</text></svg>
<div style="left:283.5px;top:593.9px;width:9px;height:9px;background:#fff;border:1px solid #d2d2da;box-sizing:border-box;"></div>
<div style="left:286.0px;top:596.4px;width:4px;height:4px;background:#666;"></div>
<svg style="left:297.7px;top:594.4px;" width="13" height="8" viewBox="0 0 13 8"><text x="0" y="5.9" font-size="5" font-weight="bold" fill="#8a8a8e" font-family="Liberation Sans, sans-serif" textLength="2.8" lengthAdjust="spacingAndGlyphs">A</text><rect x="3" y="0" width="4.4" height="7.8" rx="0.9" fill="#2c9a3a"/><text x="5.2" y="5.7" font-size="4.6" font-weight="bold" text-anchor="middle" fill="#e2f5e4" font-family="Liberation Sans, sans-serif">B</text><text x="7.7" y="5.9" font-size="5" font-weight="bold" fill="#8a8a8e" font-family="Liberation Sans, sans-serif" textLength="2.8" lengthAdjust="spacingAndGlyphs">C</text></svg>
<div style="left:356.5px;top:597.1999999999999px;width:6px;height:2.4px;background:#a2a2a7;"></div>
<svg style="left:388.5px;top:594.4px;" width="13" height="8" viewBox="0 0 13 8"><rect x="0" y="0" width="5.2" height="7.8" rx="0.9" fill="#0c57a8"/><text x="2.6" y="5.6" font-size="4.6" font-weight="bold" text-anchor="middle" fill="#dbe9f8" font-family="Liberation Sans, sans-serif">A</text><text x="5.8" y="5.9" font-size="5.4" font-weight="bold" fill="#8a8a8e" font-family="Liberation Sans, sans-serif" textLength="5.6" lengthAdjust="spacingAndGlyphs">BC</text></svg>
<span style="top:608.5px;left:85.65px;transform-origin:100% 50%;transform:scaleX(0.817);"><i>12</i></span>
<span style="top:608.5px;left:119.89px;transform-origin:100% 50%;transform:scaleX(0.713);"><i>1</i></span>
<span style="top:608.5px;left:131.0px;transform-origin:0 50%;transform:scaleX(0.923);"><i>0012A0</i></span>
<span style="top:608.5px;left:174.05px;transform-origin:0 50%;transform:scaleX(0.949);"><i>06.01.10</i></span>
<div style="left:283.5px;top:608.8000000000001px;width:9px;height:9px;background:#fff;border:1px solid #d2d2da;box-sizing:border-box;"></div>
<svg style="left:284.5px;top:609.8000000000001px;" width="7" height="7" viewBox="0 0 7 7"><path d="M1 3.6L2.8 5.6L6.2 1.2" fill="none" stroke="#555" stroke-width="0.9"/></svg>
<span style="top:607.5px;left:388.7px;transform-origin:0 50%;transform:scaleX(0.88);"><i>Fundamente nach Nummer, wie in Zeichnung angebenen</i></span>
<span style="top:628.0px;left:85.65px;transform-origin:100% 50%;transform:scaleX(0.817);">12</span>
<span style="top:628.0px;left:115.66px;transform-origin:100% 50%;transform:scaleX(0.875);">11</span>
<span style="top:628.0px;left:131.0px;transform-origin:0 50%;transform:scaleX(0.857);">0012B0</span>
<span style="top:628.0px;left:174.05px;transform-origin:0 50%;transform:scaleX(0.949);">06.01.10</span>
<span style="top:628.0px;left:231.75px;transform-origin:0 50%;transform:scaleX(0.871);">Fundam 1</span>
<div style="left:283.5px;top:628.6px;width:9px;height:9px;background:#fff;border:1px solid #d2d2da;box-sizing:border-box;"></div>
<span style="top:628.0px;left:323.2px;transform-origin:100% 50%;transform:scaleX(1.021);"><b>91</b></span>
<span style="top:628.0px;left:359.98px;transform-origin:100% 50%;transform:scaleX(1.022);color:#38700f;"><b>2,000</b></span>
<span style="top:623.2px;left:388.7px;transform-origin:0 50%;transform:scaleX(0.989);">(0,25*1,5*3,75)+(0,25*0,75*2,25)+</span>
<span style="top:632.3px;left:388.7px;transform-origin:0 50%;transform:scaleX(0.98);">(0,25*0,65*2,1)</span>
<span style="top:646.8px;left:85.65px;transform-origin:100% 50%;transform:scaleX(0.817);">12</span>
<span style="top:646.8px;left:115.0px;transform-origin:100% 50%;transform:scaleX(0.817);">21</span>
<span style="top:646.8px;left:137.12px;transform-origin:100% 50%;transform:scaleX(0.876);">0012C0</span>
<span style="top:646.8px;left:174.05px;transform-origin:0 50%;transform:scaleX(0.949);">06.01.10</span>
<div style="left:283.5px;top:647.4px;width:9px;height:9px;background:#fff;border:1px solid #d2d2da;box-sizing:border-box;"></div>
<span style="top:646.8px;left:323.2px;transform-origin:100% 50%;transform:scaleX(1.021);"><b>91</b></span>
<span style="top:628.0px;left:340.06px;transform:scaleX(0.936);"><b>E</b></span>
</div>
<div class="title-icons">
<div style="left:2px;top:6.5px;width:10.8px;height:12.3px;background:#fff;border:1px solid #96d2d6;border-left:none;border-radius:0 2px 2px 0;box-sizing:border-box;"></div>
<span style="left:3.4px;top:7.2px;font-size:9.2px;line-height:11px;font-weight:bold;color:#0a98a2;">A</span>
<svg style="left:20.5px;top:6.5px;" width="12" height="12" viewBox="0 0 12 12"><circle cx="5.9" cy="6" r="5" fill="#f5f5f9" stroke="#606064" stroke-width="1"/><text x="5.9" y="9.2" font-size="8.8" font-weight="bold" text-anchor="middle" fill="#3a3a3e" font-family="Liberation Sans, sans-serif">?</text></svg>
<svg style="left:41px;top:8px;" width="12" height="9" viewBox="0 0 12 9"><path d="M0.3 0.8Q0.3 0.3 0.8 0.3H3.8L4.8 1.5H8.6Q9 1.5 9 2V3.2H3L1 8.2H0.3Z" fill="#e2b36a"/><path d="M3.3 3.6H11.6L9.6 8.7H1.2Z" fill="#d9a455"/></svg>
<svg style="left:60px;top:11.2px;" width="5" height="3" viewBox="0 0 5 3"><path d="M0 0H5L2.5 3Z" fill="#111"/></svg>
<svg style="left:73.3px;top:8.2px;" width="9" height="8.6" viewBox="0 0 9 8.6"><path d="M0 0H9V8.6H0Z M2.2 0.9V4.2H6.8V0.9Z M2.4 5.6V8.6H6.6V5.6Z" fill="#8b8b8d" fill-rule="evenodd"/><rect x="5" y="6.2" width="1" height="2.4" fill="#8b8b8d"/></svg>
<svg style="left:97.2px;top:10px;" width="6" height="5" viewBox="0 0 6 5"><path d="M0.3 0.5H5.7" stroke="#9a9a9e" stroke-width="0.9"/><path d="M0.3 1.8H5.7L3 4.6Z" fill="#9a9a9e"/></svg>
<svg style="left:213.2px;top:28.6px;" width="7" height="7" viewBox="0 0 7 7"><circle cx="4.2" cy="2.7" r="2" fill="none" stroke="#666" stroke-width="0.8"/><path d="M2.8 4.2L0.5 6.5" stroke="#666" stroke-width="0.9"/></svg>
</div>
<div class="ribbon-large-icons">
<svg style="left:10.5px;top:46px;" width="19" height="20.5" viewBox="0 0 19 20.5"><path d="M0.8 0.8H12.8L17.8 5.8V19.7H0.8Z" fill="none" stroke="#a4a4a6" stroke-width="1.5"/><path d="M12.6 0.8V6H17.8" fill="none" stroke="#a4a4a6" stroke-width="1.2"/></svg>
<svg style="left:54px;top:47.1px;" width="17.4" height="17.6" viewBox="0 0 17.4 17.6"><path d="M1 0H16.4Q17.4 0 17.4 1V16.6Q17.4 17.6 16.4 17.6H1Q0 17.6 0 16.6V1Q0 0 1 0Z M2.784 1.2320000000000002V8.8H14.702999999999998V1.2320000000000002Z M6.002999999999999 11.528000000000002V17.6H14.702999999999998V11.528000000000002Z" fill="#a4a4a6" fill-rule="evenodd"/><rect x="10.265999999999998" y="12.936" width="2.5229999999999997" height="3.7840000000000003" fill="#a4a4a6"/></svg>
<svg style="left:96.1px;top:46.1px;" width="15.6" height="15.7" viewBox="0 0 15.6 15.7"><path d="M1 0H14.6Q15.6 0 15.6 1V14.7Q15.6 15.7 14.6 15.7H1Q0 15.7 0 14.7V1Q0 0 1 0Z M2.496 1.099V7.85H13.181999999999999V1.099Z M5.382 10.2835V15.7H13.181999999999999V10.2835Z" fill="#a4a4a6" fill-rule="evenodd"/><rect x="9.203999999999999" y="11.539499999999999" width="2.262" height="3.3754999999999997" fill="#a4a4a6"/></svg>
<div style="left:102.2px;top:55px;width:15px;height:12px;background:#efeef4;"></div>
<svg style="left:103px;top:55.8px;" width="13.6" height="10.8" viewBox="0 0 13.6 10.8"><rect x="0.9" y="1.1" width="11.6" height="8.6" fill="none" stroke="#a4a4a6" stroke-width="1.7"/><rect x="0.1" y="0.1" width="13.2" height="2" fill="#a4a4a6"/></svg>
<svg style="left:141px;top:45.5px;" width="21.4" height="21.4" viewBox="0 0 21.4 21.4"><circle cx="10.7" cy="10.7" r="9" fill="none" stroke="#a4a4a6" stroke-width="2.7"/><path d="M4.5 16.9L16.9 4.5" stroke="#a4a4a6" stroke-width="2.6"/></svg>
<svg style="left:190px;top:45.6px;" width="22" height="21.4" viewBox="0 0 22 21.4"><path d="M1.3 1.3H9.6L13 4.7V17.2H1.3Z" fill="#efeef4" stroke="#a4a4a6" stroke-width="1.5"/><path d="M3.2 5.2H4.8M3.2 8H4.8M3.2 10.8H4.8M3.2 13.6H4.8" stroke="#a4a4a6" stroke-width="1.2"/><path d="M6 3H16.4L21.6 8.2V21H6Z" fill="#efeef4"/><path d="M7.2 4.3H15.8L20.2 8.7V19.8H7.2Z" fill="#efeef4" stroke="#a4a4a6" stroke-width="1.5"/><path d="M15.4 4.6V9.1H19.9" fill="none" stroke="#a4a4a6" stroke-width="1.2"/><path d="M9.6 9.6H13.4M9.6 12.4H17.8M9.6 15.1H17.8M9.6 17.6H17.8" stroke="#a4a4a6" stroke-width="1.4"/></svg>
<svg style="left:233px;top:44.8px;" width="18" height="22.4" viewBox="0 0 18 22.4"><rect x="0.4" y="2.8" width="14.4" height="16.8" rx="1.2" fill="#a4a4a6"/><circle cx="7.6" cy="1.7" r="1.5" fill="#a4a4a6"/><rect x="3" y="2" width="9.2" height="4" rx="1.2" fill="#c6c6c8" stroke="#a4a4a6" stroke-width="1"/><path d="M5.8 9H18V22.4H5.8Z" fill="#efeef4"/><path d="M7.4 10.6H16.6V21.2H7.4Z" fill="#efeef4" stroke="#a4a4a6" stroke-width="1.3"/><path d="M9.2 13.4H12.6M9.2 16.2H15M9.2 18.9H15" stroke="#a4a4a6" stroke-width="1.3"/></svg>
<svg style="left:275px;top:47.3px;" width="18.4" height="17.8" viewBox="0 0 18.4 17.8"><path d="M2.4 2.3L16 15.5M16 2.3L2.4 15.5" stroke="#a4a4a6" stroke-width="4.8"/></svg>
<svg style="left:325px;top:46.8px;" width="18.4" height="20.4" viewBox="0 0 18.4 20.4"><path d="M9 4.9H4.8Q2 4.9 2 7.8V12Q2 14.6 4.8 15.3" fill="none" stroke="#0c4da2" stroke-width="2.9"/><path d="M5.5 0.2H8.3L12 4.9L8 9.3H5.3L7.6 4.9Z" fill="#0c4da2"/><path d="M9.4 15.3H13.6Q16.4 15.3 16.4 12.4V8Q16.4 5.6 13.6 4.9" fill="none" stroke="#0c4da2" stroke-width="2.9"/><path d="M12.9 20.2H10.1L6.4 15.4L10.4 10.9H13.1L10.8 15.4Z" fill="#0c4da2"/></svg>
<svg style="left:1003.5px;top:45.7px;" width="18.2" height="21" viewBox="0 0 18.2 21"><path d="M0.8 0.8H12.5L17.3 5.6V20.1H0.8Z" fill="#fff" stroke="#3c3c3c" stroke-width="1.4"/><path d="M12.3 1V5.9H17.2" fill="none" stroke="#3c3c3c" stroke-width="1"/><path d="M2 4.3H11.5M2 7H15.8M2 9.7H15.8M2 12.4H15.8M2 15.1H15.8M2 17.8H15.8" stroke="#2f74c0" stroke-width="0.9"/><path d="M5.8 2V19" stroke="#2f74c0" stroke-width="0.9"/></svg>
<svg style="left:1065px;top:83.2px;" width="5" height="2.8" viewBox="0 0 5 2.8"><path d="M0 0H5L2.5 2.8Z" fill="#6a6a6e"/></svg>
</div>
<div class="ribbon-small-icons">
<svg style="left:372.6px;top:45.2px;" width="7.4" height="10.2" viewBox="0 0 7.4 10.2"><rect x="0" y="0" width="7.4" height="10.2" rx="0.6" fill="#4d4d50"/><rect x="0.9" y="0.9" width="5.6" height="2.1" fill="#3b86d6"/><path d="M0.9 3.9H6.5V9.3H0.9Z" fill="#c9c9cc"/><path d="M2.75 3.9V9.3M4.65 3.9V9.3M0.9 5.7H6.5M0.9 7.5H6.5" stroke="#4d4d50" stroke-width="0.5"/></svg>
<svg style="left:372.6px;top:62px;" width="7.4" height="10.2" viewBox="0 0 7.4 10.2"><rect x="0" y="0" width="7.4" height="10.2" rx="0.6" fill="#4d4d50"/><rect x="0.9" y="0.9" width="5.6" height="2.1" fill="#3b86d6"/><path d="M0.9 3.9H6.5V9.3H0.9Z" fill="#c9c9cc"/><path d="M2.75 3.9V9.3M4.65 3.9V9.3M0.9 5.7H6.5M0.9 7.5H6.5" stroke="#4d4d50" stroke-width="0.5"/></svg>
<svg style="left:478px;top:47px;" width="11.5" height="7.5" viewBox="0 0 11.5 7.5"><path d="M0.4 4.5V6.6H2.6" fill="none" stroke="#e0a050" stroke-width="0.8"/><rect x="4.4" y="0.8" width="6.2" height="5.8" rx="1.3" fill="#fff" stroke="#3a3a3a" stroke-width="1.5"/></svg>
<svg style="left:479px;top:63.2px;" width="10" height="9" viewBox="0 0 10 9"><path d="M5 0.3L9.8 4.6H8.6V8.8H5.9V5.8H4.1V8.8H1.4V4.6H0.2Z" fill="#b4b4b8"/></svg>
<svg style="left:584.9px;top:62px;" width="10.2" height="9.4" viewBox="0 0 10.2 9.4"><path d="M2.6 0.2H7.6V4.4H2.6Z" fill="#fff" stroke="#55555a" stroke-width="0.5"/><rect x="3.4" y="0.9" width="3.4" height="1.9" fill="#3b86d6"/><path d="M0.2 4.2H10V8.2H0.2Z" fill="#47474b"/><path d="M1.6 6.4H8.6V9.2H1.6Z" fill="#fff" stroke="#47474b" stroke-width="0.5"/></svg>
<svg style="left:584.9px;top:78.6px;" width="10.2" height="9.4" viewBox="0 0 10.2 9.4"><path d="M2.6 0.2H7.6V4.4H2.6Z" fill="#fff" stroke="#55555a" stroke-width="0.5"/><rect x="3.4" y="0.9" width="3.4" height="1.9" fill="#3b86d6"/><path d="M0.2 4.2H10V8.2H0.2Z" fill="#47474b"/><path d="M1.6 6.4H8.6V9.2H1.6Z" fill="#fff" stroke="#47474b" stroke-width="0.5"/></svg>
<svg style="left:695.9px;top:45.3px;" width="10.2" height="9.4" viewBox="0 0 10.2 9.4"><path d="M2.6 0.2H7.6V4.4H2.6Z" fill="#fff" stroke="#55555a" stroke-width="0.5"/><rect x="3.4" y="0.9" width="3.4" height="1.9" fill="#3b86d6"/><path d="M0.2 4.2H10V8.2H0.2Z" fill="#47474b"/><path d="M1.6 6.4H8.6V9.2H1.6Z" fill="#fff" stroke="#47474b" stroke-width="0.5"/></svg>
<svg style="left:695.9px;top:62px;" width="10.2" height="9.4" viewBox="0 0 10.2 9.4"><path d="M2.6 0.2H7.6V4.4H2.6Z" fill="#fff" stroke="#55555a" stroke-width="0.5"/><rect x="3.4" y="0.9" width="3.4" height="1.9" fill="#3b86d6"/><path d="M0.2 4.2H10V8.2H0.2Z" fill="#47474b"/><path d="M1.6 6.4H8.6V9.2H1.6Z" fill="#fff" stroke="#47474b" stroke-width="0.5"/></svg>
<svg style="left:695.9px;top:78.6px;" width="10.2" height="9.4" viewBox="0 0 10.2 9.4"><path d="M2.6 0.2H7.6V4.4H2.6Z" fill="#fff" stroke="#55555a" stroke-width="0.5"/><rect x="3.4" y="0.9" width="3.4" height="1.9" fill="#3b86d6"/><path d="M0.2 4.2H10V8.2H0.2Z" fill="#47474b"/><path d="M1.6 6.4H8.6V9.2H1.6Z" fill="#fff" stroke="#47474b" stroke-width="0.5"/></svg>
<svg style="left:585.2px;top:45.4px;" width="9.8" height="10" viewBox="0 0 9.8 10"><path d="M0.5 0.5H8L9.2 1.4V3L8.3 3.6L9.2 4.4V6L8.3 6.6L9.2 7.4V9.5H0.5Z" fill="#fff" stroke="#707074" stroke-width="0.8"/><rect x="1.6" y="1.7" width="5.2" height="1.2" fill="#3b86d6"/><rect x="1.6" y="3.8" width="2" height="4.4" fill="#7fb0e4"/><rect x="4.4" y="3.8" width="2.4" height="4.4" fill="#3b86d6"/></svg>
<svg style="left:682.3px;top:65.5px;" width="4.6" height="2.6" viewBox="0 0 4.6 2.6"><path d="M0 0H4.6L2.3 2.6Z" fill="#6a6a6e"/></svg>
<svg style="left:682.3px;top:82.3px;" width="4.6" height="2.6" viewBox="0 0 4.6 2.6"><path d="M0 0H4.6L2.3 2.6Z" fill="#6a6a6e"/></svg>
<svg style="left:811px;top:48.8px;" width="4.6" height="2.6" viewBox="0 0 4.6 2.6"><path d="M0 0H4.6L2.3 2.6Z" fill="#6a6a6e"/></svg>
<svg style="left:811px;top:65.5px;" width="4.6" height="2.6" viewBox="0 0 4.6 2.6"><path d="M0 0H4.6L2.3 2.6Z" fill="#6a6a6e"/></svg>
<svg style="left:811px;top:82.3px;" width="4.6" height="2.6" viewBox="0 0 4.6 2.6"><path d="M0 0H4.6L2.3 2.6Z" fill="#6a6a6e"/></svg>
<svg style="left:827.8px;top:45.2px;" width="12" height="10.2" viewBox="0 0 12 10.2"><path d="M4.5 0.6H11.6V9.6H4.5Z" fill="#2ea55c"/><path d="M8 0.6H11.6V9.6H8Z" fill="#23934f"/><path d="M0.2 1.5L6.8 0.2V10L0.2 8.7Z" fill="#1b7642"/><path d="M2.2 3.2L4.8 7M4.8 3.2L2.2 7" stroke="#fff" stroke-width="0.9"/></svg>
<svg style="left:909.3px;top:45.2px;" width="12" height="10.2" viewBox="0 0 12 10.2"><path d="M4.5 0.6H11.6V9.6H4.5Z" fill="#2ea55c"/><path d="M8 0.6H11.6V9.6H8Z" fill="#23934f"/><path d="M0.2 1.5L6.8 0.2V10L0.2 8.7Z" fill="#1b7642"/><path d="M2.2 3.2L4.8 7M4.8 3.2L2.2 7" stroke="#fff" stroke-width="0.9"/></svg>
<svg style="left:828.4px;top:61.3px;" width="11" height="11.4" viewBox="0 0 11 11.4"><path d="M5.5 2.6L10.3 4.6V8.6L5.5 10.9L0.6 8.6V4.6Z" fill="#f4f4f6" stroke="#5a5a5e" stroke-width="0.8"/><path d="M0.6 4.6L5.5 6.8L10.3 4.6M5.5 6.8V10.9" fill="none" stroke="#5a5a5e" stroke-width="0.7"/><path d="M5.5 0L8 2.3L5.5 4.6L3 2.3Z" fill="#1f5fb4"/></svg>
<svg style="left:909.9px;top:61.3px;" width="11" height="11.4" viewBox="0 0 11 11.4"><path d="M5.5 2.6L10.3 4.6V8.6L5.5 10.9L0.6 8.6V4.6Z" fill="#f4f4f6" stroke="#5a5a5e" stroke-width="0.8"/><path d="M0.6 4.6L5.5 6.8L10.3 4.6M5.5 6.8V10.9" fill="none" stroke="#5a5a5e" stroke-width="0.7"/><path d="M5.5 0L8 2.3L5.5 4.6L3 2.3Z" fill="#1f5fb4"/></svg>
</div>
<div class="glyphs">
<svg style="left:157.8px;top:114.5px;" width="6.6" height="5" viewBox="0 0 6.6 5"><path d="M0 2.5L2 0.6V1.6H5.2V0.4H6.4V4.6H5.2V3.6H2V4.4Z" fill="#fff"/></svg>
<svg style="left:170.4px;top:114.2px;" width="6.2" height="5.6" viewBox="0 0 6.2 5.6"><path d="M0.5 0.4L5.7 5.2M5.7 0.4L0.5 5.2" stroke="#fff" stroke-width="1.2"/></svg>
<svg style="left:1081px;top:130px;" width="5" height="6.5" viewBox="0 0 5 6.5"><path d="M1.2 0.3H3.8V3H4.6V3.9H2.9V6.2H2.1V3.9H0.4V3H1.2Z" fill="#55555a"/></svg>
<svg style="left:284.5px;top:156px;" width="4.6" height="2.6" viewBox="0 0 4.6 2.6"><path d="M0 0H4.6L2.3 2.6Z" fill="#55555a"/></svg>
<svg style="left:284.8px;top:400.3px;" width="4.6" height="2.6" viewBox="0 0 4.6 2.6"><path d="M0 0H4.6L2.3 2.6Z" fill="#55555a"/></svg>
<svg style="left:872.3px;top:335.2px;" width="6.4" height="6" viewBox="0 0 6.4 6"><path d="M0.6 0.5L5.8 5.5M5.8 0.5L0.6 5.5" stroke="#1a1a1a" stroke-width="1.5"/></svg>
<svg style="left:885.3px;top:337.2px;" width="4.6" height="2.6" viewBox="0 0 4.6 2.6"><path d="M0 0H4.6L2.3 2.6Z" fill="#6a6a6e"/></svg>
<svg style="left:866.5px;top:352.3px;" width="6.4" height="6" viewBox="0 0 6.4 6"><path d="M0.6 0.5L5.8 5.5M5.8 0.5L0.6 5.5" stroke="#1a1a1a" stroke-width="1.5"/></svg>
<svg style="left:879.3px;top:354.3px;" width="4.6" height="2.6" viewBox="0 0 4.6 2.6"><path d="M0 0H4.6L2.3 2.6Z" fill="#6a6a6e"/></svg>
<svg style="left:1013.6px;top:337.6px;" width="4.6" height="2.6" viewBox="0 0 4.6 2.6"><path d="M0 0H4.6L2.3 2.6Z" fill="#6a6a6e"/></svg>
<svg style="left:1024px;top:334.5px;" width="9.4" height="8.6" viewBox="0 0 9.4 8.6"><rect x="0.2" y="0" width="2.5" height="8.6" fill="#0c57a8"/><path d="M3.8 0L9.2 4.3L3.8 8.6Z" fill="#0c57a8"/></svg>
</div>
<div class="window-frame">
<div style="left:0px;top:0px;width:1092px;height:1.7px;background:#6a6a6a;"></div>
<div style="left:2px;top:1.7px;width:1089px;height:0.9px;background:#f5f5f9;"></div>
<div style="left:1090px;top:2px;width:1px;height:594px;background:#f2f2f8;"></div>
<div style="left:0px;top:0px;width:1.1px;height:663px;background:#b0b0b0;"></div>
<div style="left:1.1px;top:0px;width:1px;height:663px;background:#1c1c1c;"></div>
<div style="left:1090.9px;top:0px;width:1.1px;height:663px;background:#222;"></div>
<div style="left:0px;top:661.5px;width:1092px;height:1.5px;background:#1c1c1c;"></div>
</div>
</div>
</body>
</html>
